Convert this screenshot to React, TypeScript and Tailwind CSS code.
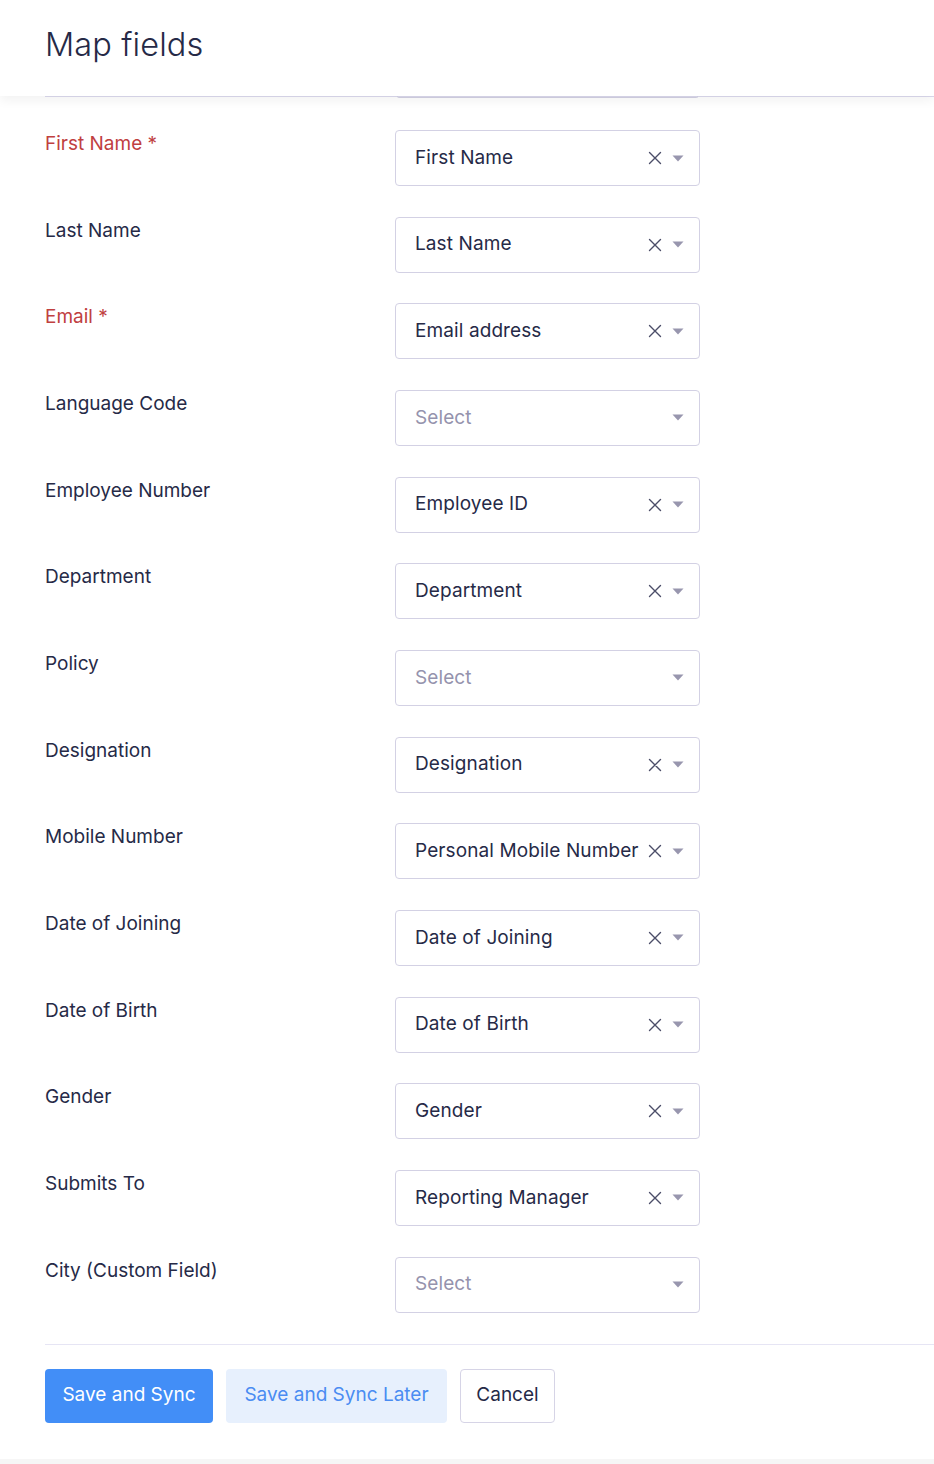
import React from "react";

type Row = { label: string; value?: string; required?: boolean };

const rows: Row[] = [
  { label: "First Name", value: "First Name", required: true },
  { label: "Last Name", value: "Last Name" },
  { label: "Email", value: "Email address", required: true },
  { label: "Language Code" },
  { label: "Employee Number", value: "Employee ID" },
  { label: "Department", value: "Department" },
  { label: "Policy" },
  { label: "Designation", value: "Designation" },
  { label: "Mobile Number", value: "Personal Mobile Number" },
  { label: "Date of Joining", value: "Date of Joining" },
  { label: "Date of Birth", value: "Date of Birth" },
  { label: "Gender", value: "Gender" },
  { label: "Submits To", value: "Reporting Manager" },
  { label: "City (Custom Field)" },
];

function ClearIcon() {
  return (
    <svg width="14" height="14" viewBox="0 0 14 14" fill="none">
      <path d="M1.5 1.5L12.5 12.5M12.5 1.5L1.5 12.5" stroke="#4b4d68" strokeWidth="1.4" strokeLinecap="round" />
    </svg>
  );
}

function Caret() {
  return (
    <svg width="12" height="7" viewBox="0 0 12 7">
      <path d="M0.5 0.5H11.5L6 6.5Z" fill="#9896ae" />
    </svg>
  );
}

function SelectBox({ value }: { value?: string }) {
  return (
    <div className="w-[305px] h-[56px] border border-[#d3d1e4] rounded-[4px] bg-white flex items-center pl-[19px] pr-[15px]">
      <span
        className={
          "flex-1 text-[19px] tracking-[0.1px] " +
          (value ? "text-[#262a47]" : "text-[#9593ad]")
        }
      >
        {value ?? "Select"}
      </span>
      {value && (
        <span className="mr-[10px] flex items-center">
          <ClearIcon />
        </span>
      )}
      <Caret />
    </div>
  );
}

export default function App() {
  return (
    <div className="min-h-[1464px] bg-[#f6f6f6] font-['Inter','Noto_Sans',sans-serif]">
      <div className="bg-white">
        <div className="relative z-10 h-[96px] bg-white flex items-center pl-[45px] shadow-[0_5px_10px_rgba(0,0,0,0.05)]">
          <h1 className="text-[32.5px] font-light text-[#262a47] tracking-[0.1px] -mt-[6px]">Map fields</h1>
        </div>
        <div className="relative h-[2px] ml-[45px]">
          <div className="h-[1px] bg-[#dcdaee]" />
          <div className="absolute left-[352px] top-0 w-[301px] h-[2px] border-b border-x border-[#d3d1e4] rounded-b-[3px]" />
        </div>
        <div className="pt-[32px] pl-[45px] flex flex-col gap-[30.67px]">
          {rows.map((r) => (
            <div key={r.label} className="flex">
              <div
                className={
                  "w-[350px] text-[19px] leading-[28px] " +
                  (r.required ? "text-[#c0403f]" : "text-[#262a47]")
                }
              >
                {r.label}
                {r.required && " *"}
              </div>
              <SelectBox value={r.value} />
            </div>
          ))}
        </div>
        <div className="ml-[45px] mt-[31px] border-t border-[#e6e5f4]" />
        <div className="pl-[45px] pt-[24px] pb-[36px] flex gap-[13px]">
          <button className="h-[54px] w-[168px] rounded-[4px] bg-[#428ef7] text-white text-[19px]">
            Save and Sync
          </button>
          <button className="h-[54px] w-[221px] rounded-[4px] bg-[#e7f0fd] text-[#4a8cf2] text-[19px]">
            Save and Sync Later
          </button>
          <button className="h-[54px] w-[95px] rounded-[4px] bg-white border border-[#d6d4e6] text-[#262a47] text-[19px]">
            Cancel
          </button>
        </div>
      </div>
    </div>
  );
}
